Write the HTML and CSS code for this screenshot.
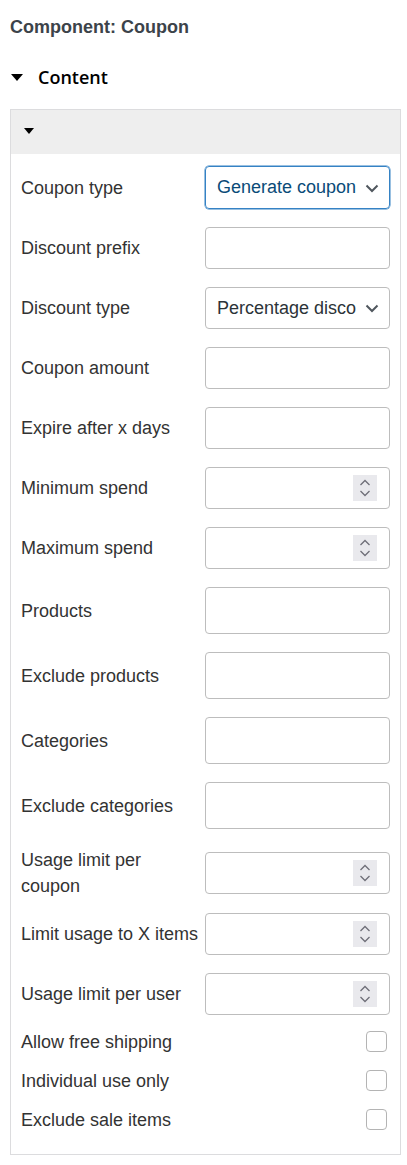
FILE: index.html
```html
<!DOCTYPE html>
<html lang="en">
<head>
    <meta charset="UTF-8">
    <meta name="viewport" content="width=device-width, initial-scale=1.0">
    <title>Component: Coupon</title>
    <link rel="stylesheet" href="styles.css">
</head>
<body>
    <div class="page">
        <h2 class="title">Component: Coupon</h2>
        <div class="section-toggle"><span class="caret"></span>Content</div>

        <div class="panel">
            <div class="panel-head"><span class="caret caret-sm"></span></div>
            <div class="fields">
                <div class="row">
                    <label>Coupon type</label>
                    <div class="select is-focus">
                        <span class="select-text">Generate coupons</span>
                        <svg class="chevron" width="14" height="9" viewBox="0 0 14 9"><path d="M1.5 1.5 L7 7 L12.5 1.5" fill="none" stroke="#50575e" stroke-width="2"/></svg>
                    </div>
                </div>
                <div class="row">
                    <label>Discount prefix</label>
                    <input class="input" type="text">
                </div>
                <div class="row">
                    <label>Discount type</label>
                    <div class="select">
                        <span class="select-text">Percentage discount</span>
                        <svg class="chevron" width="14" height="9" viewBox="0 0 14 9"><path d="M1.5 1.5 L7 7 L12.5 1.5" fill="none" stroke="#50575e" stroke-width="2"/></svg>
                    </div>
                </div>
                <div class="row">
                    <label>Coupon amount</label>
                    <input class="input" type="text">
                </div>
                <div class="row">
                    <label>Expire after x days</label>
                    <input class="input" type="text">
                </div>
                <div class="row">
                    <label>Minimum spend</label>
                    <div class="number"><input class="input" type="text"><span class="spin"><svg width="24" height="26" viewBox="0 0 24 26"><path d="M7.5 10 L12 5.5 L16.5 10 M7.5 16 L12 20.5 L16.5 16" fill="none" stroke="#6f6f78" stroke-width="1.3"/></svg></span></div>
                </div>
                <div class="row">
                    <label>Maximum spend</label>
                    <div class="number"><input class="input" type="text"><span class="spin"><svg width="24" height="26" viewBox="0 0 24 26"><path d="M7.5 10 L12 5.5 L16.5 10 M7.5 16 L12 20.5 L16.5 16" fill="none" stroke="#6f6f78" stroke-width="1.3"/></svg></span></div>
                </div>
                <div class="row">
                    <label>Products</label>
                    <input class="input input-lg" type="text">
                </div>
                <div class="row">
                    <label>Exclude products</label>
                    <input class="input input-lg" type="text">
                </div>
                <div class="row">
                    <label>Categories</label>
                    <input class="input input-lg" type="text">
                </div>
                <div class="row">
                    <label>Exclude categories</label>
                    <input class="input input-lg" type="text">
                </div>
                <div class="row row-wrap">
                    <label>Usage limit per coupon</label>
                    <div class="number"><input class="input" type="text"><span class="spin"><svg width="24" height="26" viewBox="0 0 24 26"><path d="M7.5 10 L12 5.5 L16.5 10 M7.5 16 L12 20.5 L16.5 16" fill="none" stroke="#6f6f78" stroke-width="1.3"/></svg></span></div>
                </div>
                <div class="row">
                    <label>Limit usage to X items</label>
                    <div class="number"><input class="input" type="text"><span class="spin"><svg width="24" height="26" viewBox="0 0 24 26"><path d="M7.5 10 L12 5.5 L16.5 10 M7.5 16 L12 20.5 L16.5 16" fill="none" stroke="#6f6f78" stroke-width="1.3"/></svg></span></div>
                </div>
                <div class="row">
                    <label>Usage limit per user</label>
                    <div class="number"><input class="input" type="text"><span class="spin"><svg width="24" height="26" viewBox="0 0 24 26"><path d="M7.5 10 L12 5.5 L16.5 10 M7.5 16 L12 20.5 L16.5 16" fill="none" stroke="#6f6f78" stroke-width="1.3"/></svg></span></div>
                </div>
                <div class="check-row first">
                    <label>Allow free shipping</label>
                    <span class="checkbox"></span>
                </div>
                <div class="check-row">
                    <label>Individual use only</label>
                    <span class="checkbox"></span>
                </div>
                <div class="check-row">
                    <label>Exclude sale items</label>
                    <span class="checkbox"></span>
                </div>
            </div>
        </div>
    </div>
</body>
</html>
```

FILE: styles.css
```css
body {
    margin: 0;
    background-color: #fff;
    font-family: "Liberation Sans", Arial, sans-serif;
}

.page {
    width: 391px;
    padding: 16px 0 0 10px;
}

.title {
    margin: 0;
    font-size: 18px;
    line-height: 22px;
    font-weight: bold;
    color: #3c434a;
}

.section-toggle {
    display: flex;
    align-items: center;
    margin-top: 27px;
    font-family: "Open Sans", "Noto Sans", sans-serif;
    font-size: 18px;
    font-weight: 600;
    line-height: 24px;
    color: #000;
}

.caret {
    width: 0;
    height: 0;
    margin: 0 15px 0 1px;
    border-left: 6px solid transparent;
    border-right: 6px solid transparent;
    border-top: 7px solid #000;
}

.panel {
    margin-top: 20px;
    border: 1px solid #dcdcde;
}

.panel-head {
    display: flex;
    align-items: center;
    height: 44px;
    padding-left: 12px;
    background-color: #eee;
}

.caret-sm {
    border-left-width: 5px;
    border-right-width: 5px;
    border-top-width: 6px;
    margin-top: -3px;
}

.fields {
    display: flex;
    flex-direction: column;
    gap: 18px;
    padding: 12px 10px 24px 10px;
}

.row {
    display: grid;
    grid-template-columns: 184px minmax(0, 1fr);
    align-items: center;
}

.row-wrap {
    margin-bottom: -4px;
}

.row label,
.check-row label {
    padding-right: 4px;
    font-size: 18px;
    line-height: 26px;
    color: #333;
}

.input {
    box-sizing: border-box;
    width: 100%;
    height: 42px;
    margin: 0;
    border: 1px solid #bdbdbd;
    border-radius: 4px;
    background-color: #fff;
    font-size: 17px;
}

.input-lg {
    height: 47px;
}

.select {
    box-sizing: border-box;
    display: flex;
    align-items: center;
    min-width: 0;
    height: 42px;
    padding: 0 10px 0 11px;
    border: 1px solid #bdbdbd;
    border-radius: 4px;
    font-size: 18px;
    color: #2c3338;
}

.select.is-focus {
    height: 43px;
    border-color: #3582c4;
    box-shadow: 0 0 0 0.5px #3582c4;
    color: #0a4b78;
}

.select-text {
    flex: 1;
    min-width: 0;
    overflow: hidden;
    white-space: nowrap;
}

.chevron {
    flex-shrink: 0;
    margin-left: 9px;
    margin-top: 1px;
}

.number {
    position: relative;
}

.spin {
    position: absolute;
    top: 8px;
    right: 13px;
    width: 24px;
    height: 26px;
    background-color: #e9e9ed;
}

.spin svg {
    display: block;
}

.check-row {
    display: flex;
    justify-content: space-between;
    align-items: center;
    height: 21px;
}

.check-row.first {
    margin-top: -2px;
}

.checkbox {
    box-sizing: border-box;
    width: 21px;
    height: 21px;
    margin-right: 3px;
    border: 1px solid #b4b4b4;
    border-radius: 4px;
}
```
